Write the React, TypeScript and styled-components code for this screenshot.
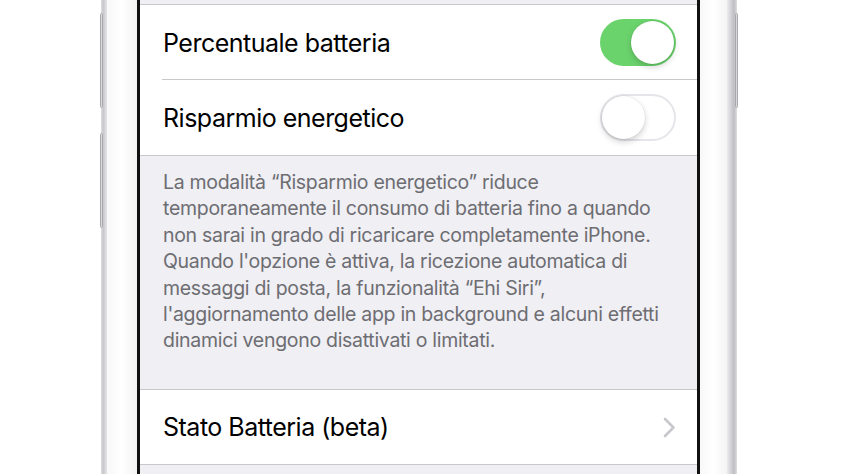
import React from 'react';
import styled, { createGlobalStyle } from 'styled-components';

const GlobalStyle = createGlobalStyle`
  html, body {
    margin: 0;
    padding: 0;
    background: #ffffff;
  }
  body {
    font-family: Inter, "Noto Sans", "Liberation Sans", sans-serif;
    -webkit-font-smoothing: antialiased;
  }
`;

const Stage = styled.div`
  width: 844px;
  height: 474px;
  overflow: hidden;
  display: flex;
  justify-content: flex-start;
  padding-left: 101px;
  box-sizing: border-box;
  background: #ffffff;
`;

const Device = styled.div`
  position: relative;
  display: flex;
  height: 474px;
`;

const Rim = styled.div<{ $side: 'left' | 'right' }>`
  width: ${(p) => (p.$side === 'left' ? 6 : 10)}px;
  background: ${(p) =>
    p.$side === 'left'
      ? 'linear-gradient(90deg, #dcdcdf 0%, #c9c9cd 40%, #e6e6e8 100%)'
      : 'linear-gradient(90deg, #ececee 0%, #cfcfd2 45%, #bfbfc3 70%, #dedee0 100%)'};
`;

const Bezel = styled.div<{ $w: number }>`
  width: ${(p) => p.$w}px;
  background: linear-gradient(90deg, #f8f8f9 0%, #ffffff 50%, #f4f4f5 100%);
`;

const SideButton = styled.div<{ $side: 'left' | 'right'; $top: number; $h: number }>`
  position: absolute;
  ${(p) => (p.$side === 'left' ? 'left: -1px;' : 'right: -1px;')}
  top: ${(p) => p.$top}px;
  width: 3px;
  height: ${(p) => p.$h}px;
  border-radius: 2px;
  background: #d9d9dc;
  border: 1px solid #a9a9ad;
  box-sizing: border-box;
`;

const Screen = styled.div`
  width: 557px;
  border-left: 3px solid #111;
  border-right: 3px solid #111;
  background: #efeff4;
  display: flex;
  flex-direction: column;
`;

const TopGap = styled.div`
  height: 4px;
  flex: none;
`;

const Group = styled.div`
  background: #ffffff;
  border-top: 1px solid #c8c7cc;
  border-bottom: 1px solid #c8c7cc;
  flex: none;
`;

const Row = styled.div<{ $h: number; $divider?: boolean }>`
  height: ${(p) => p.$h}px;
  display: flex;
  align-items: center;
  justify-content: space-between;
  padding: 0 21px 0 23px;
  position: relative;
  box-sizing: border-box;
  ${(p) =>
    p.$divider &&
    `&::after {
      content: '';
      position: absolute;
      left: 22px;
      right: 0;
      bottom: 0;
      height: 1px;
      background: #c8c7cc;
    }`}
`;

const Label = styled.span`
  font-size: 25px;
  color: #000;
  letter-spacing: -0.5px;
`;

const Track = styled.div<{ $on: boolean }>`
  width: 76px;
  height: 47px;
  border-radius: 24px;
  box-sizing: border-box;
  position: relative;
  background: ${(p) => (p.$on ? '#6ad36c' : '#ffffff')};
  border: ${(p) => (p.$on ? 'none' : '2px solid #e5e5ea')};
`;

const Knob = styled.div<{ $on: boolean }>`
  position: absolute;
  top: ${(p) => (p.$on ? 2 : 0)}px;
  ${(p) => (p.$on ? 'right: 2px;' : 'left: 0px;')}
  width: 43px;
  height: 43px;
  border-radius: 50%;
  background: #fff;
  box-shadow: 0 3px 6px rgba(0, 0, 0, 0.18), 0 0 0 0.5px rgba(0, 0, 0, 0.08);
`;

const Footer = styled.div`
  height: 233px;
  padding: 13px 10px 0 23px;
  box-sizing: border-box;
  flex: none;
  font-size: 19.5px;
  line-height: 26.4px;
  color: #6d6d72;
  letter-spacing: -0.3px;
  white-space: nowrap;
`;

const Chevron = styled.svg`
  width: 13px;
  height: 21px;
`;

const footerLines = [
  'La modalità “Risparmio energetico” riduce',
  'temporaneamente il consumo di batteria fino a quando',
  'non sarai in grado di ricaricare completamente iPhone.',
  "Quando l'opzione è attiva, la ricezione automatica di",
  'messaggi di posta, la funzionalità “Ehi Siri”,',
  "l'aggiornamento delle app in background e alcuni effetti",
  'dinamici vengono disattivati o limitati.',
];

function Toggle({ on }: { on: boolean }) {
  return (
    <Track $on={on}>
      <Knob $on={on} />
    </Track>
  );
}

export default function App() {
  return (
    <>
      <GlobalStyle />
      <Stage>
        <Device>
          <Rim $side="left" />
          <Bezel $w={30} />
          <Screen>
            <TopGap />
            <Group>
              <Row $h={75} $divider>
                <Label>Percentuale batteria</Label>
                <Toggle on />
              </Row>
              <Row $h={75}>
                <Label>Risparmio energetico</Label>
                <Toggle on={false} />
              </Row>
            </Group>
            <Footer>
              {footerLines.map((line, i) => (
                <React.Fragment key={i}>
                  {line}
                  {i < footerLines.length - 1 && <br />}
                </React.Fragment>
              ))}
            </Footer>
            <Group>
              <Row $h={74}>
                <Label>Stato Batteria (beta)</Label>
                <Chevron viewBox="0 0 13 21">
                  <path
                    d="M2 2 L10.5 10.5 L2 19"
                    fill="none"
                    stroke="#c7c7cc"
                    strokeWidth="2.6"
                    strokeLinecap="round"
                    strokeLinejoin="round"
                  />
                </Chevron>
              </Row>
            </Group>
          </Screen>
          <Bezel $w={27} />
          <Rim $side="right" />
          <SideButton $side="left" $top={13} $h={95} />
          <SideButton $side="left" $top={133} $h={95} />
          <SideButton $side="right" $top={13} $h={95} />
        </Device>
      </Stage>
    </>
  );
}
